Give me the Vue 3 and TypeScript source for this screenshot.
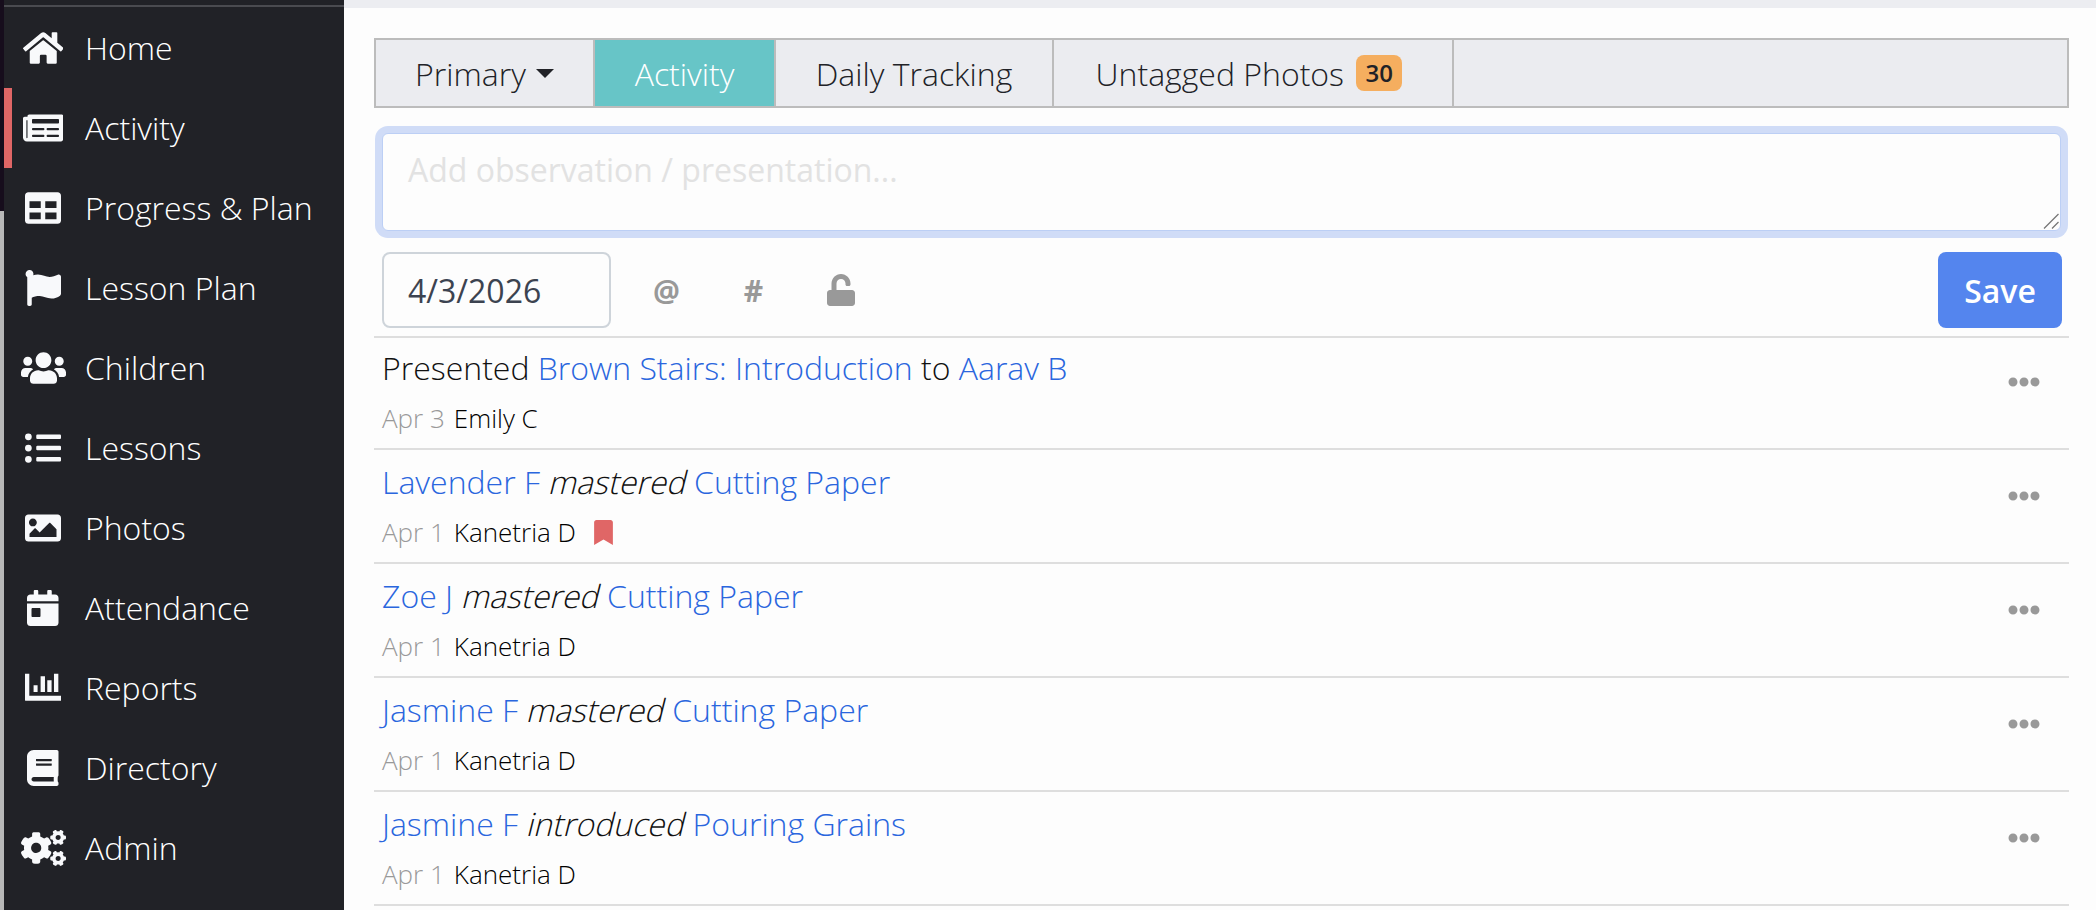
<script setup lang="ts">
type NavItem = { label: string; w: number; d: string; active?: boolean }
type Part = { text: string; kind: 'plain' | 'link' | 'verb' }
type Entry = { parts: Part[]; date: string; who: string; saved?: boolean }

const nav: NavItem[] = [
  { label: 'Home', w: 576, d: 'M280.37 148.26L96 300.11V464a16 16 0 0 0 16 16l112.06-.29a16 16 0 0 0 15.92-16V368a16 16 0 0 1 16-16h64a16 16 0 0 1 16 16v95.64a16 16 0 0 0 16 16.05L464 480a16 16 0 0 0 16-16V300L295.67 148.26a12.19 12.19 0 0 0-15.3 0zM571.6 251.47L488 182.56V44.05a12 12 0 0 0-12-12h-56a12 12 0 0 0-12 12v72.61L318.47 43a48 48 0 0 0-61 0L4.34 251.47a12 12 0 0 0-1.6 16.9l25.5 31A12 12 0 0 0 45.15 301l235.22-193.74a12.19 12.19 0 0 1 15.3 0L530.9 301a12 12 0 0 0 16.9-1.6l25.5-31a12 12 0 0 0-1.7-16.93z' },
  { label: 'Activity', w: 576, active: true, d: 'M552 64H88c-13.255 0-24 10.745-24 24v8H24c-13.255 0-24 10.745-24 24v272c0 30.928 25.072 56 56 56h472c26.51 0 48-21.49 48-48V88c0-13.255-10.745-24-24-24zM56 400a8 8 0 0 1-8-8V144h16v248a8 8 0 0 1-8 8zm236-16H140c-6.627 0-12-5.373-12-12v-8c0-6.627 5.373-12 12-12h152c6.627 0 12 5.373 12 12v8c0 6.627-5.373 12-12 12zm208 0H348c-6.627 0-12-5.373-12-12v-8c0-6.627 5.373-12 12-12h152c6.627 0 12 5.373 12 12v8c0 6.627-5.373 12-12 12zm-208-96H140c-6.627 0-12-5.373-12-12v-8c0-6.627 5.373-12 12-12h152c6.627 0 12 5.373 12 12v8c0 6.627-5.373 12-12 12zm208 0H348c-6.627 0-12-5.373-12-12v-8c0-6.627 5.373-12 12-12h152c6.627 0 12 5.373 12 12v8c0 6.627-5.373 12-12 12zm0-96H140c-6.627 0-12-5.373-12-12v-40c0-6.627 5.373-12 12-12h360c6.627 0 12 5.373 12 12v40c0 6.627-5.373 12-12 12z' },
  { label: 'Progress & Plan', w: 512, d: 'M464 32H48C21.49 32 0 53.49 0 80v352c0 26.51 21.49 48 48 48h416c26.51 0 48-21.49 48-48V80c0-26.51-21.49-48-48-48zM224 416H64v-96h160v96zm0-160H64v-96h160v96zm224 160H288v-96h160v96zm0-160H288v-96h160v96z' },
  { label: 'Lesson Plan', w: 512, d: 'M349.565 98.783C295.978 98.783 251.721 64 184.348 64c-24.955 0-47.309 4.384-68.045 12.013a55.947 55.947 0 0 0 3.586-23.562C118.117 24.015 94.806 1.206 66.338.048 34.345-1.254 8 24.296 8 56c0 19.026 9.497 35.825 24 45.945V488c0 13.255 10.745 24 24 24h16c13.255 0 24-10.745 24-24v-94.4c28.311-12.064 63.582-22.122 114.435-22.122 53.588 0 97.844 34.783 165.217 34.783 48.169 0 86.667-16.294 122.505-40.858C506.84 359.452 512 349.571 512 339.045v-243.1c0-23.393-24.269-38.87-45.485-29.016-34.338 15.948-76.454 31.854-116.95 31.854z' },
  { label: 'Children', w: 640, d: 'M96 224c35.3 0 64-28.7 64-64s-28.7-64-64-64-64 28.7-64 64 28.7 64 64 64zm448 0c35.3 0 64-28.7 64-64s-28.7-64-64-64-64 28.7-64 64 28.7 64 64 64zm32 32h-64c-17.6 0-33.5 7.1-45.1 18.6 40.3 22.1 68.9 62 75.1 109.4h66c17.7 0 32-14.3 32-32v-32c0-35.3-28.7-64-64-64zm-256 0c61.9 0 112-50.1 112-112S381.9 32 320 32 208 82.1 208 144s50.1 112 112 112zm76.8 32h-8.3c-20.8 10-43.9 16-68.5 16s-47.6-6-68.5-16h-8.3C179.6 288 128 339.6 128 403.2V432c0 26.5 21.5 48 48 48h288c26.5 0 48-21.5 48-48v-28.8c0-63.6-51.6-115.2-115.2-115.2zm-223.7-13.4C161.5 263.1 145.6 256 128 256H64c-35.3 0-64 28.7-64 64v32c0 17.7 14.3 32 32 32h65.9c6.3-47.4 34.9-87.3 75.2-109.4z' },
  { label: 'Lessons', w: 512, d: 'M48 48a48 48 0 1 0 48 48 48 48 0 0 0-48-48zm0 160a48 48 0 1 0 48 48 48 48 0 0 0-48-48zm0 160a48 48 0 1 0 48 48 48 48 0 0 0-48-48zm448 16H176a16 16 0 0 0-16 16v32a16 16 0 0 0 16 16h320a16 16 0 0 0 16-16v-32a16 16 0 0 0-16-16zm0-320H176a16 16 0 0 0-16 16v32a16 16 0 0 0 16 16h320a16 16 0 0 0 16-16V80a16 16 0 0 0-16-16zm0 160H176a16 16 0 0 0-16 16v32a16 16 0 0 0 16 16h320a16 16 0 0 0 16-16v-32a16 16 0 0 0-16-16z' },
  { label: 'Photos', w: 512, d: 'M464 448H48c-26.51 0-48-21.49-48-48V112c0-26.51 21.49-48 48-48h416c26.51 0 48 21.49 48 48v288c0 26.51-21.49 48-48 48zM112 120c-30.928 0-56 25.072-56 56s25.072 56 56 56 56-25.072 56-56-25.072-56-56-56zM64 384h384V272l-87.515-87.515c-4.686-4.686-12.284-4.686-16.971 0L208 320l-55.515-55.515c-4.686-4.686-12.284-4.686-16.971 0L64 336v48z' },
  { label: 'Attendance', w: 448, d: 'M0 464c0 26.5 21.5 48 48 48h352c26.5 0 48-21.5 48-48V192H0v272zm64-192c0-8.8 7.2-16 16-16h96c8.8 0 16 7.2 16 16v96c0 8.8-7.2 16-16 16H80c-8.8 0-16-7.2-16-16v-96zM400 64h-48V16c0-8.8-7.2-16-16-16h-32c-8.8 0-16 7.2-16 16v48H160V16c0-8.8-7.2-16-16-16h-32c-8.8 0-16 7.2-16 16v48H48C21.5 64 0 85.5 0 112v48h448v-48c0-26.5-21.5-48-48-48z' },
  { label: 'Reports', w: 512, d: 'M0 53h61v312h451v72H12a12 12 0 0 1-12-12zM122 218h57v95h-57zM222 90h62v223h-62zM317 146h61v167h-61zM412 53h62v260h-62z' },
  { label: 'Directory', w: 448, d: 'M448 360V24c0-13.3-10.7-24-24-24H96C43 0 0 43 0 96v320c0 53 43 96 96 96h328c13.3 0 24-10.7 24-24v-16c0-7.5-3.5-14.3-8.9-18.7-4.2-15.4-4.2-59.3 0-74.7 5.4-4.3 8.9-11.1 8.9-18.6zM128 134c0-3.3 2.7-6 6-6h212c3.3 0 6 2.7 6 6v20c0 3.3-2.7 6-6 6H134c-3.3 0-6-2.7-6-6v-20zm0 64c0-3.3 2.7-6 6-6h212c3.3 0 6 2.7 6 6v20c0 3.3-2.7 6-6 6H134c-3.3 0-6-2.7-6-6v-20zm253.4 250H96c-17.7 0-32-14.3-32-32 0-17.6 14.4-32 32-32h285.4c-1.9 17.1-1.9 46.9 0 64z' },
  { label: 'Admin', w: 640, d: 'M512.1 191l-8.2 14.3c-3 5.3-9.4 7.5-15.1 5.4-11.8-4.4-22.6-10.7-32.1-18.6-4.6-3.8-5.8-10.5-2.8-15.7l8.2-14.3c-6.9-8-12.3-17.3-15.9-27.4h-16.5c-6 0-11.2-4.3-12.2-10.3-2-12-2.1-24.6 0-37.1 1-6 6.2-10.4 12.2-10.4h16.5c3.6-10.1 9-19.4 15.9-27.4l-8.2-14.3c-3-5.2-1.9-11.9 2.8-15.7 9.5-7.9 20.4-14.2 32.1-18.6 5.7-2.1 12.1.1 15.1 5.4l8.2 14.3c10.5-1.9 21.2-1.9 31.7 0L552 6.3c3-5.3 9.4-7.5 15.1-5.4 11.8 4.4 22.6 10.7 32.1 18.6 4.6 3.8 5.8 10.5 2.8 15.7l-8.2 14.3c6.9 8 12.3 17.3 15.9 27.4h16.5c6 0 11.2 4.3 12.2 10.3 2 12 2.1 24.6 0 37.1-1 6-6.2 10.4-12.2 10.4h-16.5c-3.6 10.1-9 19.4-15.9 27.4l8.2 14.3c3 5.2 1.9 11.9-2.8 15.7-9.5 7.9-20.4 14.2-32.1 18.6-5.7 2.1-12.1-.1-15.1-5.4l-8.2-14.3c-10.4 1.9-21.2 1.9-31.7 0zm-10.5-58.8c38.5 29.6 82.4-14.3 52.8-52.8-38.5-29.7-82.4 14.3-52.8 52.8zM386.3 286.1l33.7 16.8c10.1 5.8 14.5 18.1 10.5 29.1-8.9 24.2-26.4 46.4-42.6 65.8-7.4 8.9-20.2 11.1-30.3 5.3l-29.1-16.8c-16 13.7-34.6 24.6-54.9 31.7v33.6c0 11.6-8.3 21.6-19.7 23.6-24.6 4.2-50.4 4.4-75.9 0-11.5-2-20-11.9-20-23.6V418c-20.3-7.2-38.9-18-54.9-31.7L74 403c-10 5.8-22.9 3.6-30.3-5.3-16.2-19.4-33.3-41.6-42.2-65.7-4-10.9.4-23.2 10.5-29.1l33.3-16.8c-3.9-20.9-3.9-42.4 0-63.4L12 205.8c-10.1-5.8-14.6-18.1-10.5-29 8.9-24.2 26-46.4 42.2-65.8 7.4-8.9 20.2-11.1 30.3-5.3l29.1 16.8c16-13.7 34.6-24.6 54.9-31.7V57.1c0-11.5 8.2-21.5 19.6-23.5 24.6-4.2 50.5-4.4 76-.1 11.5 2 20 11.9 20 23.6v33.6c20.3 7.2 38.9 18 54.9 31.7l29.1-16.8c10-5.8 22.9-3.6 30.3 5.3 16.2 19.4 33.2 41.6 42.1 65.8 4 10.9.1 23.2-10 29.1l-33.7 16.8c3.9 21 3.9 42.5 0 63.5zm-117.6 21.1c59.2-77-28.7-164.9-105.7-105.7-59.2 77 28.7 164.9 105.7 105.7zm243.4 182.7l-8.2 14.3c-3 5.3-9.4 7.5-15.1 5.4-11.8-4.4-22.6-10.7-32.1-18.6-4.6-3.8-5.8-10.5-2.8-15.7l8.2-14.3c-6.9-8-12.3-17.3-15.9-27.4h-16.5c-6 0-11.2-4.3-12.2-10.3-2-12-2.1-24.6 0-37.1 1-6 6.2-10.4 12.2-10.4h16.5c3.6-10.1 9-19.4 15.9-27.4l-8.2-14.3c-3-5.2-1.9-11.9 2.8-15.7 9.5-7.9 20.4-14.2 32.1-18.6 5.7-2.1 12.1.1 15.1 5.4l8.2 14.3c10.5-1.9 21.2-1.9 31.7 0l8.2-14.3c3-5.3 9.4-7.5 15.1-5.4 11.8 4.4 22.6 10.7 32.1 18.6 4.6 3.8 5.8 10.5 2.8 15.7l-8.2 14.3c6.9 8 12.3 17.3 15.9 27.4h16.5c6 0 11.2 4.3 12.2 10.3 2 12 2.1 24.6 0 37.1-1 6-6.2 10.4-12.2 10.4h-16.5c-3.6 10.1-9 19.4-15.9 27.4l8.2 14.3c3 5.2 1.9 11.9-2.8 15.7-9.5 7.9-20.4 14.2-32.1 18.6-5.7 2.1-12.1-.1-15.1-5.4l-8.2-14.3c-10.4 1.9-21.2 1.9-31.7 0zM501.6 431c38.5 29.6 82.4-14.3 52.8-52.8-38.5-29.6-82.4 14.3-52.8 52.8z' },
]

const mastered = (name: string, lesson: string, verb = 'mastered'): Part[] => [
  { text: name, kind: 'link' },
  { text: verb, kind: 'verb' },
  { text: lesson, kind: 'link' },
]

const entries: Entry[] = [
  {
    parts: [
      { text: 'Presented', kind: 'plain' },
      { text: 'Brown Stairs: Introduction', kind: 'link' },
      { text: 'to', kind: 'plain' },
      { text: 'Aarav B', kind: 'link' },
    ],
    date: 'Apr 3',
    who: 'Emily C',
  },
  { parts: mastered('Lavender F', 'Cutting Paper'), date: 'Apr 1', who: 'Kanetria D', saved: true },
  { parts: mastered('Zoe J', 'Cutting Paper'), date: 'Apr 1', who: 'Kanetria D' },
  { parts: mastered('Jasmine F', 'Cutting Paper'), date: 'Apr 1', who: 'Kanetria D' },
  { parts: mastered('Jasmine F', 'Pouring Grains', 'introduced'), date: 'Apr 1', who: 'Kanetria D' },
]
</script>

<template>
  <div class="page">
    <div class="edge"></div>
    <aside class="sidebar">
      <a v-for="item in nav" :key="item.label" class="nav-item" :class="{ active: item.active }">
        <span class="nav-icon">
          <svg :viewBox="`0 0 ${item.w} 512`" :width="(item.w / 512) * 36" height="36" fill="currentColor">
            <path :d="item.d" />
          </svg>
        </span>
        <span class="nav-label">{{ item.label }}</span>
      </a>
      <div class="nav-item">
        <span class="nav-icon">
          <svg viewBox="0 0 512 512" width="36" height="36" fill="currentColor"><circle cx="256" cy="256" r="248" /></svg>
        </span>
      </div>
    </aside>

    <main class="main">
      <div class="topbar"></div>
      <div class="content">
        <nav class="tabs">
          <a class="tab">Primary<span class="caret"></span></a>
          <a class="tab on">Activity</a>
          <a class="tab">Daily Tracking</a>
          <a class="tab">Untagged Photos<span class="badge">30</span></a>
        </nav>

        <div class="note-wrap">
          <textarea class="note" placeholder="Add observation / presentation..."></textarea>
          <svg class="grip" viewBox="0 0 16 16" width="16" height="16" fill="none" stroke="#777" stroke-width="1.3">
            <path d="M1 15.5L15.5 1M9 15.5L15.5 9" />
          </svg>
        </div>

        <div class="toolbar">
          <input class="date" type="text" value="4/3/2026" />
          <span class="tool tool-at">@</span>
          <span class="tool">#</span>
          <span class="tool">
            <svg viewBox="0 0 448 512" width="28" height="32" fill="currentColor">
              <path d="M400 256H152V152.9c0-39.6 31.7-72.5 71.3-72.9 40-.4 72.7 32.1 72.7 72v16c0 13.3 10.7 24 24 24h32c13.3 0 24-10.7 24-24v-16C376 68 307.5-.3 223.5 0 139.5.3 72 69.5 72 153.5V256H48c-26.5 0-48 21.5-48 48v160c0 26.5 21.5 48 48 48h352c26.5 0 48-21.5 48-48V304c0-26.5-21.5-48-48-48z" />
            </svg>
          </span>
          <button class="save" type="button">Save</button>
        </div>

        <ul class="feed">
          <li v-for="(entry, i) in entries" :key="i" class="entry">
            <div class="entry-body">
              <div class="entry-title">
                <template v-for="(part, j) in entry.parts" :key="j">
                  <a v-if="part.kind === 'link'" class="link">{{ part.text }}</a>
                  <em v-else-if="part.kind === 'verb'">{{ part.text }}</em>
                  <span v-else>{{ part.text }}</span>
                  {{ ' ' }}
                </template>
              </div>
              <div class="entry-meta">
                <span class="entry-date">{{ entry.date }}</span>
                <span class="entry-who">{{ entry.who }}</span>
                <svg v-if="entry.saved" class="mark" viewBox="0 0 384 512" width="19" height="25" fill="currentColor">
                  <path d="M0 512V48C0 21.49 21.49 0 48 0h288c26.51 0 48 21.49 48 48v464L192 400 0 512z" />
                </svg>
              </div>
            </div>
            <svg class="more" viewBox="0 0 512 512" width="32" height="32" fill="currentColor">
              <path d="M328 256c0 39.8-32.2 72-72 72s-72-32.2-72-72 32.2-72 72-72 72 32.2 72 72zm104-72c-39.8 0-72 32.2-72 72s32.2 72 72 72 72-32.2 72-72-32.2-72-72-72zm-352 0c-39.8 0-72 32.2-72 72s32.2 72 72 72 72-32.2 72-72-32.2-72-72-72z" />
            </svg>
          </li>
        </ul>
      </div>
    </main>
  </div>
</template>

<style>
html,
body {
  margin: 0;
  overflow: hidden;
}
</style>

<style scoped>
.page {
  display: flex;
  width: 2096px;
  height: 910px;
  overflow: hidden;
  background: #fdfdfd;
  font-family: 'Open Sans', 'Liberation Sans', sans-serif;
  font-weight: 300;
  color: #212227;
}

.edge {
  flex: 0 0 4px;
  background: linear-gradient(#160d1c 0, #160d1c 211px, #b8b8b8 211px);
}

.sidebar {
  flex: 0 0 340px;
  box-sizing: border-box;
  height: 910px;
  padding-top: 8px;
  background: #212227;
  color: #fff;
  position: relative;
}

.sidebar::before {
  content: '';
  position: absolute;
  top: 5px;
  left: 0;
  right: 0;
  height: 2px;
  background: #4a4b50;
}

.nav-item {
  display: flex;
  align-items: center;
  height: 80px;
  font-size: 32px;
  position: relative;
}

.nav-item.active::before {
  content: '';
  position: absolute;
  left: 0;
  top: 0;
  bottom: 0;
  width: 8px;
  background: #e06666;
}

.nav-icon {
  flex: 0 0 46px;
  margin-left: 16px;
  margin-right: 19px;
  display: flex;
  justify-content: center;
  color: #f8f9fb;
}

.nav-label {
  margin-top: -2px;
}

.main {
  flex: 1;
  min-width: 0;
}

.topbar {
  height: 8px;
  background: #ecedf1;
}

.content {
  padding: 30px 27px 0 30px;
}

.tabs {
  display: flex;
  box-sizing: border-box;
  height: 70px;
  border: 2px solid #bcbcbc;
  background: #ebecf0;
  font-size: 32px;
}

.tab {
  display: flex;
  align-items: center;
  justify-content: center;
  border-right: 2px solid #bcbcbc;
  box-sizing: border-box;
}

.tab:nth-child(1) { width: 219px; }
.tab:nth-child(2) { width: 181px; }
.tab:nth-child(3) { width: 278px; }
.tab:nth-child(4) { width: 400px; padding-right: 8px; }

.tab.on {
  background: #67c5c7;
  color: #fff;
}

.caret {
  margin-left: 10px;
  border-top: 9px solid #212227;
  border-left: 9px solid transparent;
  border-right: 9px solid transparent;
}

.badge {
  margin-left: 12px;
  padding: 0 9.5px;
  height: 36px;
  line-height: 36px;
  border-radius: 8px;
  background: #f5ae5f;
  font-size: 24px;
  font-weight: 600;
}

.note-wrap {
  position: relative;
  width: 1679px;
  height: 98px;
  margin: 25px 0 0 8px;
}

.note {
  display: block;
  box-sizing: border-box;
  width: 100%;
  height: 100%;
  padding: 14px 25px;
  border: 1px solid #bccff5;
  border-radius: 6px;
  outline: none;
  resize: none;
  box-shadow: 0 0 0 7px #d0dcf7;
  background: #fdfdfd;
  font: inherit;
  font-size: 32px;
  font-weight: 400;
}

.note::placeholder {
  color: #e2e2e2;
}

.grip {
  position: absolute;
  right: 2px;
  bottom: 2px;
}

.toolbar {
  display: flex;
  align-items: center;
  height: 76px;
  margin: 21px 7px 0 8px;
}

.date {
  box-sizing: border-box;
  width: 229px;
  height: 76px;
  padding: 0 24px;
  border: 2px solid #ced4da;
  border-radius: 8px;
  background: transparent;
  outline: none;
  font: inherit;
  font-size: 32px;
  font-weight: 400;
  color: #3c4350;
}

.tool {
  display: flex;
  justify-content: center;
  width: 87px;
  font-size: 30px;
  font-weight: 700;
  color: #999;
}

.tool-at {
  margin-left: 12px;
}

.save {
  margin-left: auto;
  width: 124px;
  height: 76px;
  border: none;
  border-radius: 8px;
  background: #5485ee;
  color: #fff;
  font: inherit;
  font-size: 32px;
  font-weight: 600;
}

.feed {
  list-style: none;
  margin: 8px 0 0;
  padding: 0;
}

.entry {
  display: flex;
  justify-content: space-between;
  box-sizing: border-box;
  height: 114px;
  padding: 2px 0 0 8px;
  border-bottom: 2px solid #dedede;
}

.entry:first-child {
  padding-top: 0;
  border-top: 2px solid #dedede;
}

.entry-title {
  margin-top: 6px;
  font-size: 32px;
  line-height: 48px;
  color: #111;
}

/* the reference has no italic face: upright glyphs, slanted by the browser */
.entry-title em {
  display: inline-block;
  font-style: normal;
  transform: skewX(-14deg);
  transform-origin: 0 70%;
}

.link {
  color: #2a66de;
}

.entry-meta {
  display: flex;
  align-items: center;
  height: 36px;
  margin-top: 8px;
  font-size: 26px;
  color: #000;
}

.entry-date {
  color: #999;
  margin-right: 9px;
}

.mark {
  margin-left: 18px;
  color: #e06666;
}

.more {
  margin: 28px 29px 0 0;
  color: #999;
}
</style>
